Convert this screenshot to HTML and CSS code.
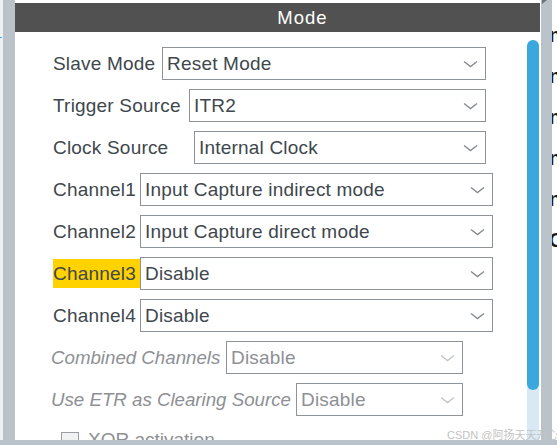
FILE: index.html
```html
<!DOCTYPE html>
<html lang="en">
<head>
<meta charset="utf-8">
<title>Mode</title>
<link rel="stylesheet" href="styles.css">
</head>
<body>
<div class="screen">
  <div class="edge-left"><span class="tick"></span></div>
  <div class="frame"></div>
  <div class="panel">
    <div class="header">Mode</div>
    <div class="body">
      <div class="form">
        <div class="row">
          <span class="label">Slave Mode</span>
          <div class="select w-slave"><span class="value">Reset Mode</span><svg class="chev" width="15" height="8" viewBox="0 0 15 8"><polyline points="1,1.5 7.5,6.5 14,1.5"/></svg></div>
        </div>
        <div class="row">
          <span class="label">Trigger Source</span>
          <div class="select w-trigger"><span class="value">ITR2</span><svg class="chev" width="15" height="8" viewBox="0 0 15 8"><polyline points="1,1.5 7.5,6.5 14,1.5"/></svg></div>
        </div>
        <div class="row">
          <span class="label">Clock Source</span>
          <div class="select w-clock"><span class="value">Internal Clock</span><svg class="chev" width="15" height="8" viewBox="0 0 15 8"><polyline points="1,1.5 7.5,6.5 14,1.5"/></svg></div>
        </div>
        <div class="row">
          <span class="label">Channel1</span>
          <div class="select w-channel"><span class="value">Input Capture indirect mode</span><svg class="chev" width="15" height="8" viewBox="0 0 15 8"><polyline points="1,1.5 7.5,6.5 14,1.5"/></svg></div>
        </div>
        <div class="row">
          <span class="label">Channel2</span>
          <div class="select w-channel"><span class="value">Input Capture direct mode</span><svg class="chev" width="15" height="8" viewBox="0 0 15 8"><polyline points="1,1.5 7.5,6.5 14,1.5"/></svg></div>
        </div>
        <div class="row">
          <span class="label highlight">Channel3</span>
          <div class="select w-channel"><span class="value">Disable</span><svg class="chev" width="15" height="8" viewBox="0 0 15 8"><polyline points="1,1.5 7.5,6.5 14,1.5"/></svg></div>
        </div>
        <div class="row">
          <span class="label">Channel4</span>
          <div class="select w-channel"><span class="value">Disable</span><svg class="chev" width="15" height="8" viewBox="0 0 15 8"><polyline points="1,1.5 7.5,6.5 14,1.5"/></svg></div>
        </div>
        <div class="row disabled">
          <span class="label">Combined Channels</span>
          <div class="select w-combined"><span class="value">Disable</span><svg class="chev" width="15" height="8" viewBox="0 0 15 8"><polyline points="1,1.5 7.5,6.5 14,1.5"/></svg></div>
        </div>
        <div class="row disabled">
          <span class="label">Use ETR as Clearing Source</span>
          <div class="select w-etr"><span class="value">Disable</span><svg class="chev" width="15" height="8" viewBox="0 0 15 8"><polyline points="1,1.5 7.5,6.5 14,1.5"/></svg></div>
        </div>
        <div class="check-row">
          <span class="checkbox"></span>
          <span class="check-label">XOR activation</span>
        </div>
      </div>
      <div class="scroll"><div class="thumb"></div></div>
    </div>
  </div>
  <div class="frame frame-right"><span class="corner"></span></div>
  <div class="edge-right">
    <span>n</span><span>n</span><span>n</span><span>n</span><span>n</span><span>C</span>
  </div>
  <div class="watermark">CSDN @阿扬天天开心</div>
</div>
<div class="bottom-bar"></div>
</body>
</html>
```

FILE: styles.css
```css
* { box-sizing: border-box; }

html, body {
  margin: 0;
  padding: 0;
  width: 557px;
  height: 445px;
  overflow: hidden;
  background: #ffffff;
  font-family: "Liberation Sans", Arial, sans-serif;
}

.screen {
  position: relative;
  display: flex;
  height: 440px;
  overflow: hidden;
}

.edge-left {
  position: relative;
  width: 3px;
  flex: none;
  background: #eef0f2;
}

.tick {
  position: absolute;
  left: 0;
  top: 37px;
  width: 2px;
  height: 1px;
  background: #3aa8dc;
}

.frame {
  width: 12px;
  flex: none;
  background: #b9c3c9;
}

.frame-right {
  position: relative;
  width: 11px;
  margin-left: 1px;
}

.corner {
  position: absolute;
  left: 1px;
  top: 0;
  width: 0;
  height: 0;
  border-left: 5px solid #6c7277;
  border-bottom: 4px solid transparent;
}

.panel {
  width: 525px;
  flex: none;
  display: flex;
  flex-direction: column;
  padding-top: 3px;
  background: #ffffff;
}

.header {
  height: 29px;
  flex: none;
  background: #505150;
  color: #ffffff;
  font-size: 18.5px;
  letter-spacing: 1px;
  line-height: 30px;
  text-align: center;
  padding-left: 50px;
}

.body {
  flex: 1;
  display: flex;
  min-height: 0;
}

.form {
  flex: 1;
  display: flex;
  flex-direction: column;
  gap: 9px;
  padding: 15px 0 0 38px;
}

.row {
  display: flex;
  align-items: center;
  height: 33px;
  width: 440px;
  font-size: 19px;
  letter-spacing: 0.2px;
  color: #40474d;
}

.label {
  flex: 1;
  min-width: 0;
  white-space: nowrap;
  line-height: 29px;
}

.highlight {
  background: #ffd200;
  height: 29px;
}

.select {
  flex: none;
  height: 33px;
  display: flex;
  align-items: center;
  justify-content: space-between;
  border: 1px solid #8e9397;
  padding: 0 7px 0 4px;
  white-space: nowrap;
}

.w-slave { width: 324px; margin-right: 7px; }
.w-trigger { width: 297px; margin-right: 7px; }
.w-clock { width: 292px; margin-right: 7px; }
.w-channel { width: 353px; }
.w-combined { width: 237px; margin-right: 30px; }
.w-etr { width: 167px; margin-right: 30px; }

.chev {
  flex: none;
  fill: none;
  stroke: #878b90;
  stroke-width: 1.4;
}

.disabled {
  color: #8d9094;
}

.disabled .label {
  font-style: italic;
  font-size: 18.7px;
  letter-spacing: 0;
  margin-left: -2px;
}

.disabled .chev {
  stroke: #c2c6ca;
}

.check-row {
  display: flex;
  align-items: flex-start;
  gap: 9px;
  padding: 7px 0 0 8px;
  font-size: 19px;
  color: #8d9094;
}

.checkbox {
  flex: none;
  width: 18px;
  height: 18px;
  border: 1px solid #9a9ea2;
  background: #f2f2f2;
}

.check-label {
  line-height: 19px;
  margin-top: -2px;
}

.scroll {
  width: 12px;
  flex: none;
  margin-top: 8px;
  margin-right: 1px;
  background: #d8e8f5;
  border-radius: 6px 6px 0 0;
}

.thumb {
  height: 350px;
  background: #3aa8dc;
  border-radius: 6px;
}

.edge-right {
  flex: 1;
  overflow: hidden;
  display: flex;
  flex-direction: column;
  gap: 21px;
  padding-top: 25px;
  font-size: 20px;
  font-weight: bold;
  line-height: 20px;
  color: #1a1a1a;
}

.edge-right span {
  display: block;
  margin-left: -3px;
}

.watermark {
  position: absolute;
  left: 447px;
  top: 426px;
  font-size: 11px;
  color: #c3c3c3;
  font-family: "Liberation Sans", "Noto Sans CJK SC", sans-serif;
  white-space: nowrap;
}

.bottom-bar {
  height: 5px;
  background: #b9c3c9;
}
```
